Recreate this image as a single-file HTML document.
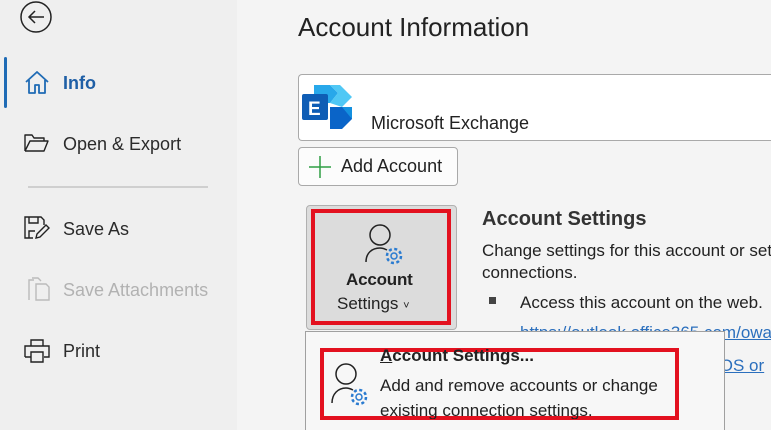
<!DOCTYPE html>
<html><head><meta charset="utf-8"><style>
*{margin:0;padding:0;box-sizing:border-box}
html,body{width:771px;height:430px;overflow:hidden}
body{background:#f4f4f4;font-family:"Liberation Sans",sans-serif;color:#252525;position:relative}
#wrap{position:absolute;left:0;top:0;width:771px;height:430px;overflow:hidden}
.a{position:absolute;white-space:nowrap}
#side{position:absolute;left:0;top:0;width:237px;height:430px;background:#efefef}
.nav{font-size:18px;color:#2b2b2b}
.box{position:absolute;border:1px solid #a9a9a9;border-radius:4px;background:#fff}
.red{position:absolute;border:4px solid #e3111f}
</style></head><body><div id="wrap">
<div id="side"></div>
<svg class="a" style="left:20px;top:1px" width="34" height="34" viewBox="0 0 34 34"><circle cx="16" cy="16" r="15" fill="none" stroke="#222" stroke-width="1.5"/><path d="M24 16H9M15 10l-6 6 6 6" fill="none" stroke="#222" stroke-width="1.5"/></svg>
<div class="a" style="left:4px;top:57px;width:3px;height:51px;background:#1f6bb5;border-radius:2px"></div>
<svg class="a" style="left:24px;top:70px" width="26" height="26" viewBox="0 0 26 26"><path d="M2 12L13 2l11 10M5 10v13h6v-8h4v8h6V10" fill="none" stroke="#1f6bb5" stroke-width="1.8" stroke-linejoin="round"/></svg>
<div class="a nav" style="left:63px;top:73px;color:#1f5fa6;font-weight:bold">Info</div>
<svg class="a" style="left:24px;top:133px" width="26" height="20" viewBox="0 0 26 20"><path d="M1 18V2h7l2 3h10v3M1 18h19l4-10H6L1 18" fill="none" stroke="#222" stroke-width="1.4" stroke-linejoin="round"/></svg>
<div class="a nav" style="left:63px;top:134px">Open &amp; Export</div>
<div class="a" style="left:28px;top:186px;width:180px;height:2px;background:#cfcfcf"></div>
<svg class="a" style="left:24px;top:216px" width="26" height="24" viewBox="0 0 26 24"><path d="M9 22H1V1h16l3 3v5M5 1v6h9V1M5 22v-7h6" fill="none" stroke="#222" stroke-width="1.4"/><path d="M12 22l1-4 9-9 3 3-9 9z" fill="none" stroke="#222" stroke-width="1.4"/></svg>
<div class="a nav" style="left:63px;top:219px">Save As</div>
<svg class="a" style="left:27px;top:276px" width="24" height="26" viewBox="0 0 24 26"><path d="M2 24V4h5M5 2h6l3 3M9 8h10l3 3v13H9z" fill="none" stroke="#bbb" stroke-width="1.4"/></svg>
<div class="a nav" style="left:63px;top:280px;color:#b2b2b2">Save Attachments</div>
<svg class="a" style="left:23px;top:338px" width="28" height="26" viewBox="0 0 28 26"><path d="M8 8V2h12v6M2 19V8h24v11h-5M8 14h12v10H8zM2 19h6" fill="none" stroke="#222" stroke-width="1.4"/></svg>
<div class="a nav" style="left:63px;top:341px">Print</div>

<div class="a" style="left:298px;top:12px;font-size:26px;color:#222">Account Information</div>
<div class="box" style="left:298px;top:74px;width:473px;height:67px;border-right:none;border-radius:4px 0 0 4px"></div>
<svg class="a" style="left:302px;top:85px" width="50" height="44" viewBox="0 0 50 44"><path d="M12 0h16l8 8-8 10H12z" fill="#28a8ea"/><path d="M28 0h10l12 12-10 10-12-4 8-10z" fill="#50c8f5"/><path d="M28 22h12l10 0v12l-10 10H28z" fill="#0a64c8"/><path d="M40 22l10 0v12z" fill="#1490df"/><rect x="0" y="9" width="26" height="26" rx="2" fill="#0f5db5"/><text x="6" y="30" font-size="19" font-weight="bold" fill="#fff" font-family="Liberation Sans">E</text></svg>
<div class="a" style="left:371px;top:113px;font-size:18px;color:#222">Microsoft Exchange</div>
<div class="box" style="left:298px;top:147px;width:160px;height:39px;background:#fcfcfc"></div>
<svg class="a" style="left:308px;top:155px" width="24" height="24" viewBox="0 0 24 24"><path d="M12 1v22M1 12h22" stroke="#2f9e44" stroke-width="1.5"/></svg>
<div class="a" style="left:341px;top:156px;font-size:18px;color:#222">Add Account</div>

<div class="a" style="left:306px;top:205px;width:151px;height:125px;background:#dcdcdc;border:1px solid #b0b0b0;border-radius:4px"></div>
<div class="red" style="left:311px;top:209px;width:140px;height:116px"></div>
<svg class="a" style="left:363px;top:221px" width="44" height="46" viewBox="0 0 44 46"><circle cx="17" cy="14" r="10" fill="none" stroke="#222" stroke-width="1.5"/><path d="M3 41c0-9 6-14 14-14 3 0 5 1 7 2" fill="none" stroke="#222" stroke-width="1.5"/><circle cx="31" cy="35" r="7" fill="none" stroke="#2a7bd0" stroke-width="2.5" stroke-dasharray="3 2.5"/><circle cx="31" cy="35" r="3" fill="none" stroke="#2a7bd0" stroke-width="1.5"/></svg>
<div class="a" style="left:346px;top:270px;font-size:17px;color:#222;font-weight:bold;letter-spacing:-.2px">Account</div>
<div class="a" style="left:337px;top:294px;font-size:17px;color:#222">Settings <span style="font-size:11px">˅</span></div>

<div class="a" style="left:482px;top:208px;font-size:20px;font-weight:bold;color:#333">Account Settings</div>
<div class="a" style="left:482px;top:241px;width:289px;overflow:hidden;font-size:17px;color:#222">Change settings for this account or set up more</div>
<div class="a" style="left:482px;top:263px;font-size:17px;color:#222">connections.</div>
<div class="a" style="left:489px;top:297px;width:7px;height:7px;background:#444"></div>
<div class="a" style="left:520px;top:293px;font-size:17px;color:#222">Access this account on the web.</div>
<div class="a" style="left:520px;top:323px;width:251px;overflow:hidden;font-size:17px;color:#2b6fbd;text-decoration:underline">https://outlook.office365.com/owa/</div>
<div class="a" style="left:716px;top:356px;width:55px;overflow:hidden;font-size:17px;color:#2b6fbd;text-decoration:underline">iOS or</div>

<div class="a" style="left:305px;top:331px;width:420px;height:99px;background:#f7f7f7;border:1px solid #a0a0a0;border-bottom:none"></div>
<div class="red" style="left:320px;top:348px;width:359px;height:72px"></div>
<svg class="a" style="left:329px;top:360px" width="46" height="48" viewBox="0 0 46 48"><circle cx="17" cy="14" r="10" fill="none" stroke="#222" stroke-width="1.5"/><path d="M3 43c0-9 6-15 14-15 3 0 5 1 7 2" fill="none" stroke="#222" stroke-width="1.5"/><circle cx="30" cy="37" r="7" fill="none" stroke="#2a7bd0" stroke-width="2.5" stroke-dasharray="3 2.5"/><circle cx="30" cy="37" r="3" fill="none" stroke="#2a7bd0" stroke-width="1.5"/></svg>
<div class="a" style="left:380px;top:346px;font-size:17px;font-weight:bold;color:#222"><u>A</u>ccount Settings...</div>
<div class="a" style="left:380px;top:376px;font-size:17px;color:#222">Add and remove accounts or change</div>
<div class="a" style="left:380px;top:401px;font-size:17px;color:#222;height:18px;overflow:hidden">existing connection settings.</div>
</div></body></html>
